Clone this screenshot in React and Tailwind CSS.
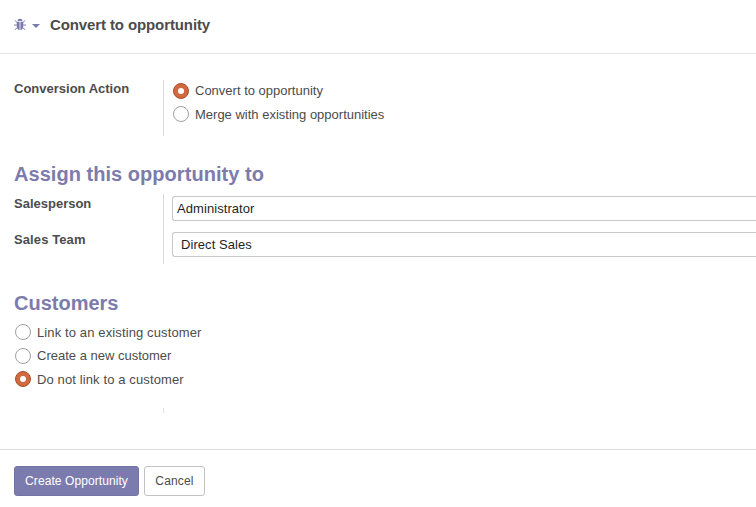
function BugIcon() {
  return (
    <svg className="h-[13px] w-3 shrink-0" viewBox="0 0 12 13" fill="#7c7bad">
      <path d="M3.500 3a2.500 2.200 0 0 1 5 0z" />
      <path d="M2.800 3.800h2.800v8.100c-1.800 0-2.800-1.300-2.800-3.400zM6.400 3.800h2.800v4.700c0 2.100-1 3.400-2.800 3.400z" />
      <path d="M1.200 2.800 3 4.500M.4 7h2.400M1.200 11.600 3.200 9.600M10.800 2.800 9 4.500M11.600 7H9.200M10.800 11.600 8.800 9.600" fill="none" stroke="#7c7bad" strokeWidth="0.950" strokeLinecap="round" />
    </svg>
  );
}

function Radio({ checked, className = "h-6", textClass = "", children }) {
  return (
    <label className={`flex items-center gap-1.5 whitespace-nowrap ${className}`}>
      {checked ? (
        <span className="flex size-4 shrink-0 items-center justify-center rounded-full border border-[#a9502b] bg-[#d0693f]">
          <span className="size-1.5 rounded-full bg-white" />
        </span>
      ) : (
        <span className="size-4 shrink-0 rounded-full border border-[#a3a09e] bg-white" />
      )}
      <span className={textClass}>{children}</span>
    </label>
  );
}

export default function App() {
  return (
    <div className="flex h-[507px] w-[756px] flex-col overflow-hidden bg-white font-['Liberation_Sans',Arial,sans-serif] text-[13px] leading-5 text-[#4c4c4c]">
      <header className="flex h-[54px] shrink-0 items-center border-b border-[#e5e5e5] pb-1 pl-3.5">
        <BugIcon />
        <span className="mt-0.5 ml-1.5 border-x-4 border-t-4 border-x-transparent border-t-[#7c7bad]" />
        <h1 className="ml-2.5 text-[15px] font-bold tracking-[-0.11px]">Convert to opportunity</h1>
      </header>

      <main className="flex h-[396px] shrink-0 flex-col border-b border-[#dedede] pl-3.5">
        <section className="mt-[26px] flex h-14">
          <div className="-mt-px w-[149px] font-bold">Conversion Action</div>
          <div className="border-l border-[#d9d9d9] pl-[9px]">
            <Radio checked className="h-[22px]">Convert to opportunity</Radio>
            <Radio className="h-6" textClass="pt-px">Merge with existing opportunities</Radio>
          </div>
        </section>

        <h2 className="mt-6 h-[34px] text-xl leading-7 font-bold tracking-[0.04px] text-[#7c7bad]">Assign this opportunity to</h2>
        <section className="flex h-[70px]">
          <div className="w-[149px] font-bold">
            <div className="h-9">Salesperson</div>
            <div className="tracking-[0.1px]">Sales Team</div>
          </div>
          <div className="flex flex-1 flex-col gap-[11px] border-l border-[#d9d9d9] pt-0.5 pl-2 tracking-[0.07px] text-[#1f1f1f]">
            <div className="flex h-[25px] items-center rounded-l-[3px] border border-r-0 border-[#c8c8c8] pl-1">Administrator</div>
            <div className="flex h-[25px] items-center rounded-l-[3px] border border-r-0 border-[#c8c8c8] pl-2">Direct Sales</div>
          </div>
        </section>

        <h2 className="mt-[25px] h-[31px] text-xl leading-7 font-bold text-[#7c7bad]">Customers</h2>
        <section className="h-[72px] pl-px">
          <Radio textClass="pt-px tracking-[0.12px]">Link to an existing customer</Radio>
          <Radio>Create a new customer</Radio>
          <Radio checked className="h-[22px]" textClass="pt-px tracking-[0.12px]">Do not link to a customer</Radio>
        </section>
        <div className="mt-4 ml-[149px] h-[5px] w-px bg-[#e0e0e0]" />
      </main>

      <footer className="flex gap-[5px] pt-4 pl-3.5 text-xs">
        <button className="h-[30px] w-[125px] rounded-[3px] border border-[#7473a6] bg-[#7c7bad] tracking-[0.08px] text-white">Create Opportunity</button>
        <button className="h-[30px] w-[61px] rounded-[3px] border border-[#c2c2c2] bg-white tracking-[0.15px]">Cancel</button>
      </footer>
    </div>
  );
}
